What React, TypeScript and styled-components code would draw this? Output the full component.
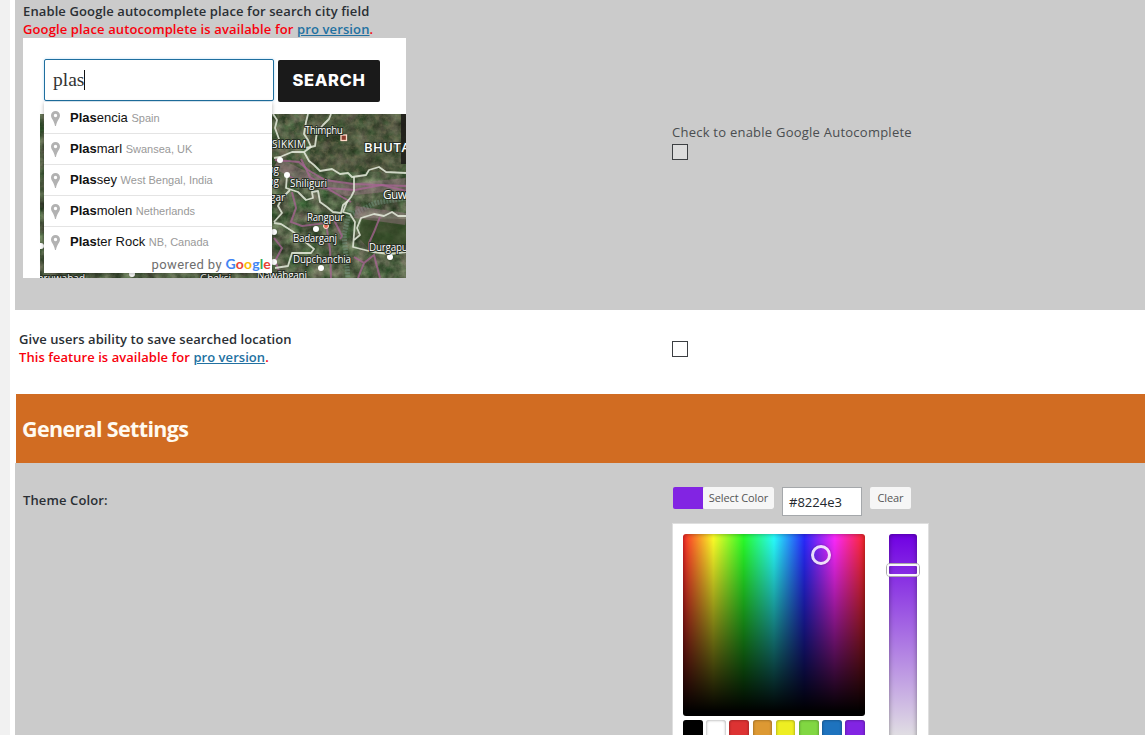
import React from 'react';
import styled, { createGlobalStyle } from 'styled-components';

const Global = createGlobalStyle`
  *, *::before, *::after { box-sizing: border-box; }
  html, body { margin: 0; height: 100%; overflow: hidden; background: #fff; }
  body { font: 13px/18px "Open Sans", "Noto Sans", sans-serif; color: #1d2327; }
`;

const Page = styled.div`
  display: grid;
  grid-template-columns: 10px 1fr;
  height: 735px;
  overflow: hidden;
  background: #f1f1f1;
`;

const Panel = styled.main`
  grid-column: 2;
  min-width: 0;
  background: #fff;
  padding-left: 5px;
`;

const Row = styled.section<{ $h: number; $shade?: boolean }>`
  display: grid;
  grid-template-columns: 657px 1fr;
  height: ${p => p.$h}px;
  background: ${p => (p.$shade ? '#cbcbcb' : '#fff')};
`;

const Cell = styled.div<{ $pad: string }>`
  padding: ${p => p.$pad};
  min-width: 0;
`;

const Label = styled.div<{ $track?: number; $red?: boolean }>`
  font-weight: 600;
  height: 18px;
  white-space: nowrap;
  letter-spacing: ${p => p.$track ?? 0.12}px;
  color: ${p => (p.$red ? '#f8000c' : '#2a2f34')};
`;

const ProLink = styled.a`
  color: #2271a1;
  text-decoration: underline;
`;

const Hint = styled.div`
  height: 18px;
  font-size: 13px;
  color: #4a4d50;
  white-space: nowrap;
  letter-spacing: 0.24px;
`;

const Checkbox = styled.span<{ $muted?: boolean }>`
  display: block;
  width: 16px;
  height: 16px;
  border: 1px solid #3c3f42;
  background: ${p => (p.$muted ? '#dcdcdc' : '#fff')};
`;

const Heading = styled.h2`
  margin: 0 0 0 1px;
  height: 69px;
  padding: 0 0 0 6px;
  background: #d16c22;
  color: #fffaf0;
  font-size: 21.500px;
  font-weight: 700;
  line-height: 69px;
  letter-spacing: -0.65px;
`;

const Preview = styled.div`
  position: relative;
  display: flex;
  flex-direction: column;
  width: 383px;
  height: 240px;
  background: #fff;
`;

const SearchBar = styled.div`
  display: flex;
  gap: 4px;
  padding: 21px 0 0 21px;
  height: 76px;
`;

const SearchInput = styled.div`
  display: flex;
  align-items: center;
  width: 230px;
  height: 42px;
  padding-left: 8px;
  border: 1px solid #1f6f9f;
  border-radius: 2px;
  box-shadow: 0 0 3px #b9dcf5;
  background: #fff;
  font: 19.5px/30px "Liberation Serif", serif;
  color: #333;
`;

const Caret = styled.i`
  width: 1px;
  height: 20px;
  background: #111;
`;

const SearchButton = styled.div`
  width: 102px;
  height: 42px;
  margin-top: 1px;
  border-radius: 2px;
  background: #1a1a1a;
  color: #fff;
  font: 800 16.500px/41px Inter, sans-serif;
  text-align: center;
  letter-spacing: 0.6px;
`;

const MapArt = styled.svg`
  display: block;
  width: 366px;
  height: 164px;
  margin-left: 17px;
`;

const Menu = styled.div`
  position: absolute;
  left: 21px;
  top: 64px;
  width: 228px;
  height: 171px;
  background: #fff;
  box-shadow: 0 1px 4px rgba(0, 0, 0, 0.3);
`;

const Item = styled.div<{ $first?: boolean }>`
  display: flex;
  align-items: center;
  height: 31px;
  padding-left: 7px;
  border-top: 1px solid ${p => (p.$first ? 'transparent' : '#e4e4e4')};
  font: 13px/30px "Liberation Sans", Arial, sans-serif;
  color: #111;
  white-space: pre;
`;

const PinIcon = styled.svg`
  width: 9px;
  height: 15px;
  margin-right: 10px;
`;

const Region = styled.span`
  font-size: 11px;
  color: #999;
`;

const Powered = styled.div`
  display: flex;
  justify-content: flex-end;
  padding-right: 1px;
  height: 16px;
  font: 13px/15px Roboto, sans-serif;
  letter-spacing: 0.4px;
  color: #6e6e6e;
  white-space: pre;
`;

const Brand = styled.span`
  font: 700 14px/14px Lato, sans-serif;
  letter-spacing: 0.15px;
`;

const Tint = styled.span<{ $c: string }>`
  color: ${p => p.$c};
`;

const Controls = styled.div`
  display: flex;
  align-items: flex-start;
  height: 36px;
  padding-left: 1px;
`;

const SmallButton = styled.div<{ $w: number }>`
  width: ${p => p.$w}px;
  height: 22px;
  border-radius: 2px;
  background: #f6f6f6;
  color: #555;
  font: 11px/22px "Open Sans", sans-serif;
  letter-spacing: -0.1px;
  text-align: center;
  white-space: nowrap;
`;

const ColorButton = styled.div`
  display: flex;
  margin-right: 8px;
  border-radius: 2px;
  overflow: hidden;
`;

const Chip = styled.span`
  width: 30px;
  height: 22px;
  background: #8224e3;
`;

const HexField = styled.div`
  width: 80px;
  height: 29px;
  margin-right: 8px;
  padding-left: 6px;
  border: 1px solid #a5a8ab;
  background: #fff;
  color: #23282d;
  font-size: 13px;
  line-height: 28px;
`;

const Picker = styled.div`
  display: grid;
  grid-template-columns: 182px 28px;
  column-gap: 24px;
  width: 257px;
  height: 240px;
  padding: 10px;
  border: 1px solid #dfdfdf;
  background: #fff;
`;

const HueField = styled.div`
  position: relative;
  height: 182px;
  border-radius: 3px;
  background:
    linear-gradient(to bottom, transparent, #000 98%),
    linear-gradient(to right, #ff2929, #ffff29, #29ff29, #29ffff, #2929ff, #ff29ff, #ff2929);
  box-shadow: inset 0 0 5px rgba(0, 0, 0, 0.4);
`;

const Target = styled.i`
  position: absolute;
  left: 128px;
  top: 11px;
  width: 20px;
  height: 20px;
  border: 3px solid rgba(255, 255, 255, 0.85);
  border-radius: 50%;
  box-shadow: 0 0 2px rgba(0, 0, 0, 0.4);
`;

const Saturation = styled.div`
  position: relative;
  height: 206px;
  border-radius: 3px;
  background: linear-gradient(#7000e3, #e3e3e3);
  box-shadow: inset 0 0 5px rgba(0, 0, 0, 0.4);
`;

const Handle = styled.i`
  position: absolute;
  left: -3px;
  top: 29px;
  width: 34px;
  height: 14px;
  border: 1px solid #aaa;
  border-radius: 4px;
  &::after {
    content: '';
    display: block;
    height: 12px;
    border: 2.500px solid rgba(255, 255, 255, 0.95);
    border-radius: 3px;
  }
`;

const Palette = styled.div`
  display: flex;
  justify-content: space-between;
  margin-top: 4px;
`;

const Swatch = styled.span<{ $c: string }>`
  width: 19.6px;
  height: 20px;
  border-radius: 3px;
  background: ${p => p.$c};
  box-shadow: inset 0 0 3px rgba(0, 0, 0, 0.45);
`;

const places = [
  ['encia', 'Spain'],
  ['marl', 'Swansea, UK'],
  ['sey', 'West Bengal, India'],
  ['molen', 'Netherlands'],
  ['ter Rock', 'NB, Canada'],
];

const brand: [string, string][] = [
  ['G', '#4285f4'], ['o', '#ea4335'], ['o', '#fbbc05'], ['g', '#4285f4'], ['l', '#34a853'], ['e', '#ea4335'],
];

const palette = ['#000', '#fff', '#dd3333', '#dd9933', '#eeee22', '#81d742', '#1e73be', '#8224e3'];

const borders = [
  'M273 114L277 120L275 128L279 139L274 145',
  'M308 114L306 122L304 134L308 140L311 147L304 152L292 152L280 157L274 158',
  'M331 114L329 119L323 125L317 132L315 146L306 148',
  'M304 152L309 161L314 165L320 171L332 169L340 174L348 173L352 177L366 175L369 170L379 167L386 172L406 173',
  'M354 177L354 191L351 197L347 202L343 212L350 214L355 222L353 247L373 252L390 254L406 252',
  'M287 175L286 188L298 192L306 200L313 198L312 192L318 191L320 202L327 207L333 212L341 213L343 205L348 201',
  'M274 223L281 224L292 231L303 240L314 249L311 253L292 253L288 266L275 268',
  'M406 216L398 216L392 212L384 216L374 214L361 218L357 228L360 235L354 240',
  'M290 190L282 198L278 206L282 213L274 222',
];

const roads = [
  'M275 160L299 162L308 170L325 180L354 184L406 186',
  'M287 175L305 185L326 188L355 190L382 185L406 191',
  'M292 192L296 208L291 222L302 226L326 223L330 249L331 278',
  'M301 159L310 177L335 193L351 202',
  'M274 238L282 248L275 261L282 278',
  'M380 217L374 232L369 243L369 251',
  'M326 227L333 218L342 236L340 239',
  'M354 257L364 263L358 278M364 263L374 255L380 278',
];

const towns: [number, number][] = [
  [280, 160], [287, 175], [316, 229], [274, 232], [274, 262], [321, 268], [390, 257], [132, 274], [41, 246],
];

const names: [string, number, number, number, number][] = [
  ['Thimphu', 305, 134, 38, 10], ['SIKKIM', 272, 148, 34, 10], ['BHUTA', 364, 152, 46, 13],
  ['Shiliguri', 290, 187, 37, 10], ['Guw', 383, 199, 24, 12], ['Rangpur', 307, 221, 37, 10],
  ['Badarganj', 293, 242, 44, 10], ['Durgapu', 369, 251, 39, 10], ['Dupchanchia', 293, 263, 58, 10],
  ['Nawābganj', 257, 279, 50, 10], ['ng', 268, 173, 11, 10], ['ng', 268, 185, 11, 10],
  ['gar', 270, 201, 15, 10], ['Gheksi', 200, 282, 31, 10], ['aruwabad', 38, 282, 47, 10],
];

const SatelliteMap = () => (
  <MapArt viewBox="40 114 366 164">
    <defs>
      <filter id="land" x="0" y="0" width="100%" height="100%" colorInterpolationFilters="sRGB">
        <feTurbulence type="fractalNoise" baseFrequency="0.09" numOctaves="5" seed="12" />
        <feColorMatrix values=".5 .2 0 0 -.03  .35 .35 0 0 .03  .4 .2 0 0 -.03  0 0 0 0 1" />
      </filter>
      <filter id="peaks" x="0" y="0" width="100%" height="100%" colorInterpolationFilters="sRGB">
        <feTurbulence type="fractalNoise" baseFrequency="0.2" numOctaves="4" seed="5" />
        <feColorMatrix values="0 0 0 0 .45  0 0 0 0 .44  0 0 0 0 .32  2.5 0 0 0 -1.15" />
      </filter>
    </defs>
    <rect x="40" y="114" width="366" height="164" filter="url(#land)" />
    <rect x="310" y="114" width="96" height="58" fill="#2f3020" opacity=".25" />
    <rect x="272" y="114" width="134" height="58" filter="url(#peaks)" opacity=".65" />
    <path d="M362 218L406 219V248L370 250L358 237Z" fill="#304622" opacity=".7" />
    <path d="M350 210L344 235L348 278M353 214L375 203L406 198" fill="none" stroke="#7e9f8e" strokeWidth="5" opacity=".4" strokeDasharray="2 1" />
    <path d="M276 163L310 180L345 190L406 184M355 212L406 219" fill="none" stroke="#a77b94" strokeWidth="12" opacity=".38" />
    {roads.map(d => <path key={d} d={d} fill="none" stroke="#a86494" strokeWidth="2" opacity=".75" />)}
    {borders.map(d => <path key={d} d={d} fill="none" stroke="#e3e8d9" strokeWidth="1.8" strokeLinejoin="round" opacity=".88" />)}
    <rect x="401" y="114" width="5" height="50" fill="#1e1d19" opacity=".9" />
    {towns.map(([x, y]) => <circle key={`${x}-${y}`} cx={x} cy={y} r="3" fill="#fff" />)}
    <rect x="341" y="135" width="5.500" height="5.500" fill="#8b3d2f" stroke="#ffd9c8" strokeWidth="1.3" />
    <circle cx="326" cy="226" r="2.500" fill="#e36b55" stroke="#ffe3d8" />
    <g fontFamily="Open Sans, sans-serif" fill="#fff" stroke="#273025" strokeWidth="2" paintOrder="stroke">
      {names.map(([t, x, y, w, s]) => (
        <text key={`${t}-${y}`} x={x} y={y} fontSize={s} textLength={w} fontWeight={s > 12 ? 600 : 500}>{t}</text>
      ))}
    </g>
  </MapArt>
);

export default function App() {
  return (
    <>
      <Global />
      <Page>
        <Panel>
          <Row $h={310} $shade>
            <Cell $pad="2px 0 0 8px">
              <Label>Enable Google autocomplete place for search city field</Label>
              <Label $red>Google place autocomplete is available for <ProLink>pro version</ProLink>.</Label>
              <Preview>
                <SearchBar>
                  <SearchInput>plas<Caret /></SearchInput>
                  <SearchButton>SEARCH</SearchButton>
                </SearchBar>
                <SatelliteMap />
                <Menu>
                  {places.map(([rest, region], i) => (
                    <Item key={rest} $first={i === 0}>
                      <PinIcon viewBox="0 0 9 15">
                        <path fillRule="evenodd" fill="#b2b2b2" d="M4.500 0A4.500 4.500 0 0 0 0 4.500C0 7.500 3.200 9.500 4 15h1C5.800 9.500 9 7.500 9 4.500A4.500 4.500 0 0 0 4.500 0Zm0 2.800a1.700 1.700 0 1 1 0 3.400a1.700 1.700 0 0 1 0-3.400Z" />
                      </PinIcon>
                      <b>Plas</b>{rest} <Region>{region}</Region>
                    </Item>
                  ))}
                  <Powered>
                    powered by <Brand>{brand.map(([l, c], i) => <Tint key={i} $c={c}>{l}</Tint>)}</Brand>
                  </Powered>
                </Menu>
              </Preview>
            </Cell>
            <Cell $pad="123px 0 0">
              <Hint>Check to enable Google Autocomplete</Hint>
              <Cell $pad="3px 0 0"><Checkbox $muted /></Cell>
            </Cell>
          </Row>
          <Row $h={84}>
            <Cell $pad="20px 0 0 4px">
              <Label $track={0.07}>Give users ability to save searched location</Label>
              <Label $red $track={0.05}>This feature is available for <ProLink>pro version</ProLink>.</Label>
            </Cell>
            <Cell $pad="31px 0 0"><Checkbox /></Cell>
          </Row>
          <Heading>General Settings</Heading>
          <Row $h={272} $shade>
            <Cell $pad="28px 0 0 8px"><Label>Theme Color:</Label></Cell>
            <Cell $pad="24px 0 0">
              <Controls>
                <ColorButton><Chip /><SmallButton $w={71}>Select Color</SmallButton></ColorButton>
                <HexField>#8224e3</HexField>
                <SmallButton $w={41}>Clear</SmallButton>
              </Controls>
              <Picker>
                <div>
                  <HueField><Target /></HueField>
                  <Palette>{palette.map(c => <Swatch key={c} $c={c} />)}</Palette>
                </div>
                <Saturation><Handle /></Saturation>
              </Picker>
            </Cell>
          </Row>
        </Panel>
      </Page>
    </>
  );
}
